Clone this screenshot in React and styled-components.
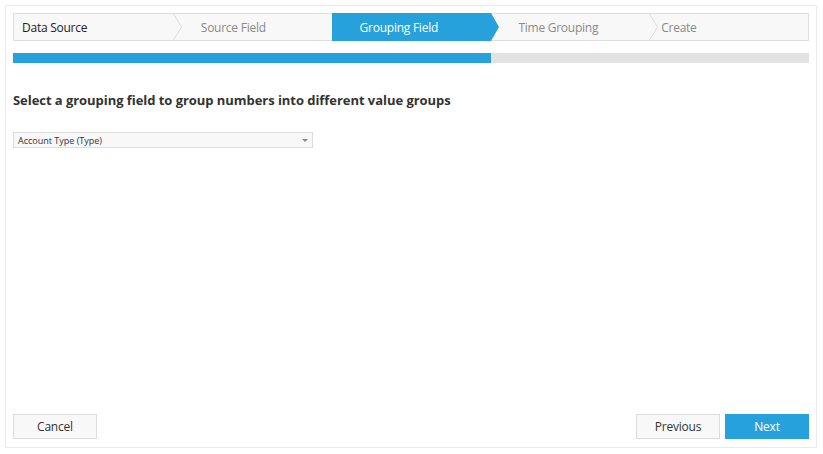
import React from 'react';
import styled, { createGlobalStyle } from 'styled-components';

const GlobalStyle = createGlobalStyle`
    body {
        margin : 0;
        background : #fff;
        font-family : "Open Sans", "Noto Sans", sans-serif;
    }
`;

const Frame = styled.div`
    margin : 5px;
    width : 812px;
    height : 443px;
    box-sizing : border-box;
    border : 1px solid #ececec;
    padding : 7px;
    display : flex;
    flex-direction : column;
`;

const Steps = styled.div`
    display : flex;
    height : 28px;
    box-sizing : border-box;
    border : 1px solid #dedede;
    background : #f8f8f8;
`;

const Step = styled.div`
    position : relative;
    flex : 0 0 20%;
    box-sizing : border-box;
    display : flex;
    align-items : center;
    padding-left : ${props => props.pad}px;
    font-size : 12px;
    letter-spacing : -0.25px;
    color : ${props => props.active ? '#fff' : props.first ? '#222' : '#8a8a8a'};
    background : ${props => props.active ? '#27a1db' : 'transparent'};
    margin : ${props => props.active ? '-1px 0' : '0'};
`;

const Tip = styled.svg`
    position : absolute;
    top : 0;
    right : -9px;
    z-index : 1;
`;

const Progress = styled.div`
    margin-top : 12px;
    height : 10px;
    background : #e2e2e2;
`;

const Fill = styled.div`
    height : 100%;
    background : #27a1db;
`;

const Title = styled.h2`
    margin : 28px 0 0;
    font-size : 13px;
    font-weight : 700;
    color : #333;
    letter-spacing : -0.05px;
`;

const Select = styled.div`
    margin-top : 23px;
    width : 300px;
    height : 16px;
    box-sizing : border-box;
    border : 1px solid #dcdcdc;
    background : #f8f8f8;
    display : flex;
    align-items : center;
    justify-content : space-between;
    padding : 0 4px;
    font-size : 9px;
    color : #333;
`;

const Caret = styled.span`
    width : 0;
    height : 0;
    border-left : 3px solid transparent;
    border-right : 3px solid transparent;
    border-top : 3px solid #888;
`;

const Footer = styled.div`
    margin-top : auto;
    display : flex;
    gap : 5px;
    padding-bottom : 1px;
`;

const Button = styled.button`
    width : 84px;
    height : 25px;
    box-sizing : border-box;
    border : 1px solid ${props => props.primary ? '#27a1db' : '#dcdcdc'};
    background : ${props => props.primary ? '#27a1db' : '#f8f8f8'};
    color : ${props => props.primary ? '#fff' : '#333'};
    font-family : inherit;
    font-size : 12px;
    letter-spacing : -0.2px;
    margin-left : ${props => props.push ? 'auto' : '0'};
    padding : 0;
`;

const steps = [
    { label : 'Data Source', pad : 8 },
    { label : 'Source Field', pad : 28 },
    { label : 'Grouping Field', pad : 28 },
    { label : 'Time Grouping', pad : 28 },
    { label : 'Create', pad : 12 },
];
const current = 2;

const App = () => {
    return <Frame>
        <GlobalStyle />
        <Steps>
            {steps.map((step, index) =>
                <Step key={index} first={index === 0} active={index === current} pad={step.pad}>
                    {step.label}
                    {index === current ?
                        <Tip width="9" height="28" viewBox="0 0 9 28">
                            <polygon points="0,0 1,0 9,14 1,28 0,28" fill="#27a1db" />
                        </Tip>
                    : index < steps.length - 1 && index !== current - 1 ?
                        <Tip width="9" height="26" viewBox="0 0 9 26">
                            <polyline points="0.5,0 8.5,13 0.5,26" fill="none" stroke="#dcdcdc" strokeWidth="1" />
                        </Tip>
                    : null}
                </Step>
            )}
        </Steps>
        <Progress>
            <Fill style={{ width: `${(current + 1) / steps.length * 100}%` }} />
        </Progress>
        <Title>Select a grouping field to group numbers into different value groups</Title>
        <Select>
            Account Type (Type)
            <Caret />
        </Select>
        <Footer>
            <Button>Cancel</Button>
            <Button push>Previous</Button>
            <Button primary>Next</Button>
        </Footer>
    </Frame>
}

export default App;
